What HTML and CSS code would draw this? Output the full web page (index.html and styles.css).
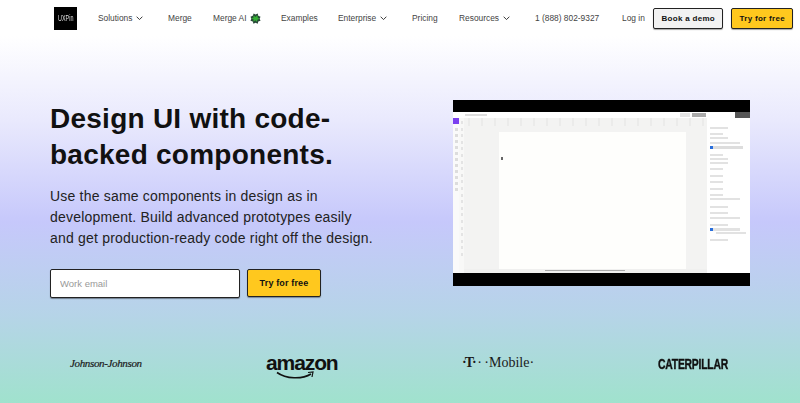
FILE: index.html
```html
<!DOCTYPE html>
<html lang="en">
<head>
<meta charset="utf-8">
<title>UXPin</title>
<link rel="stylesheet" href="styles.css">
</head>
<body>
<div class="page">
  <header class="nav">
    <div class="logo"><span>UXPin</span></div>
    <nav class="links">
      <a class="link w-solutions">Solutions <svg class="chev" viewBox="0 0 8 5"><path d="M.7.7 4 4l3.3-3.3"/></svg></a>
      <a class="link w-merge">Merge</a>
      <a class="link w-ai">Merge AI <svg class="gem" viewBox="0 0 12 12"><path class="gem-d" d="M4 .5 6 1.500 8.500.5 9 3l2.500 1-1 2.200 1 2.300L9 9.300l-.5 2.400L6 10.700l-2.200 1L3 9.300.5 8.500l1-2.300-1-2.200L3 3z"/><path class="gem-g" d="M3.500 2.500 6 4.300l2-2 .5 3 2 1-2.500 1-.5 2.500L6 8l-2.500 1.500L4 7 1.500 6l2.500-1z"/></svg></a>
      <a class="link w-examples">Examples</a>
      <a class="link w-enterprise">Enterprise <svg class="chev" viewBox="0 0 8 5"><path d="M.7.7 4 4l3.3-3.3"/></svg></a>
      <a class="link w-pricing">Pricing</a>
      <a class="link w-resources">Resources <svg class="chev" viewBox="0 0 8 5"><path d="M.7.7 4 4l3.3-3.3"/></svg></a>
      <a class="link w-phone">1 (888) 802-9327</a>
      <a class="link w-login">Log in</a>
    </nav>
    <a class="btn btn-light">Book a demo</a>
    <a class="btn btn-yellow">Try for free</a>
  </header>
  <main class="hero">
    <section class="copy">
      <h1>Design UI with code-backed components.</h1>
      <p>Use the same components in design as in development. Build advanced prototypes easily and get production-ready code right off the design.</p>
      <form class="signup">
        <input class="email" type="text" placeholder="Work email">
        <button class="btn btn-yellow btn-big" type="button">Try for free</button>
      </form>
    </section>
    <section class="video">
      <div class="bar"></div>
      <div class="app">
        <div class="app-top">
          <i class="crumb"></i><i class="pill"></i><i class="dark"></i><i class="dark-r"></i>
        </div>
        <div class="app-body">
          <div class="tools"><b></b><i></i><i></i><i></i><i></i><i></i><i></i><i></i><i></i><i></i><i></i><i></i></div>
          <div class="layers"><i></i><i></i><i></i><i></i><i></i><i></i><i></i><i></i><i></i><i></i><i></i><i></i><i></i><i></i><i></i><i></i><i></i><i></i><i></i><i></i><i></i></div>
          <div class="canvas-wrap">
            <div class="ruler"></div>
            <div class="canvas-row"><div class="sheet"><span class="cursor"></span></div></div>
            <div class="scroll"><span></span></div>
          </div>
          <div class="props">
            <i class="s"></i>
            <i class="xs m4"></i>
            <i class="s m2"></i>
            <i class="m m3"></i>
            <i class="check m2"></i>
            <i class="xs m5"></i>
            <i class="s m2"></i>
            <i class="s m2"></i>
            <i class="xs m4"></i>
            <i class="xs m5"></i>
            <i class="xs m4"></i>
            <i class="xs m5"></i>
            <i class="xs m4"></i>
            <i class="m m2"></i>
            <i class="s m6"></i>
            <i class="s m4"></i>
            <i class="m m3"></i>
            <i class="s m5"></i>
            <i class="swatch m2"></i>
            <i class="label m1"></i>
            <i class="s m5"></i>
          </div>
        </div>
      </div>
      <div class="bar bar-b"></div>
    </section>
  </main>
  <footer class="brands">
    <span class="brand jj">Johnson-Johnson</span>
    <span class="brand amazon">amazon<svg class="smile" viewBox="0 0 40 9"><path class="smile-l" d="M2 1.500C11 8 27 8.500 36 3"/><path class="smile-a" d="M33 1.500 38 1l-1 5"/></svg></span>
    <span class="brand tm"><b>&middot;T&middot;</b> &middot; &middot;Mobile&middot;</span>
    <span class="brand cat">CATERPILLAR</span>
  </footer>
</div>
</body>
</html>
```

FILE: styles.css
```css
* { box-sizing: border-box; }
html, body { margin: 0; padding: 0; }
body { font-family: "Liberation Sans", Arial, sans-serif; color: #111; }
.page {
  width: 800px; height: 403px; overflow: hidden;
  display: flex; flex-direction: column;
  background: linear-gradient(180deg, #fff 9%, #e9e9fd 30%, #c6c8fb 55%, #b6d4e8 78%, #a0e2cd 100%);
}
.nav { height: 36px; display: flex; align-items: center; padding: 0 7px 0 54px; flex: none; background: #fff; }
.logo { width: 23px; height: 23px; background: #000; color: #ddd; display: flex; align-items: center; justify-content: center; margin-right: 21px; }
.logo span { font-size: 9px; transform: scaleX(.6); white-space: nowrap; }
.links { display: flex; align-items: center; font-size: 8.400px; color: #444; }
.link { display: flex; align-items: center; gap: 3px; white-space: nowrap; }
.w-solutions { width: 70px; }
.w-merge { width: 45px; }
.w-ai { width: 68px; }
.w-examples { width: 57px; }
.w-enterprise { width: 74px; }
.w-pricing { width: 47px; }
.w-resources { width: 76px; }
.w-phone { width: 87px; }
.w-login { width: 31px; }
.chev { width: 7px; height: 4.500px; fill: none; stroke: #333; stroke-width: 1.100; margin-left: 1px; }
.gem { width: 11px; height: 11px; }
.gem-d { fill: #2b4a3a; }
.gem-g { fill: #35b035; }
.btn { display: flex; align-items: center; justify-content: center; font-family: "Liberation Sans", sans-serif; font-weight: 700; font-size: 8px; letter-spacing: .3px; height: 21px; border: 1px solid #222; border-radius: 2px; color: #111; white-space: nowrap; box-shadow: 0 1px 1px rgba(0,0,0,.35); }
.btn-light { width: 71px; background: #f2f2f2; margin-right: 8px; }
.btn-yellow { width: 62px; background: #ffc81e; }
.hero { flex: none; height: 298px; display: flex; padding: 0 50px; justify-content: space-between; }
.copy { width: 340px; padding-top: 65px; }
h1 { margin: 0; font-family: "Liberation Sans", sans-serif; font-weight: 700; font-size: 28px; line-height: 36px; letter-spacing: .25px; color: #111; width: 300px; }
.copy p { margin: 12.500px 0 0; font-family: "Liberation Sans", sans-serif; font-size: 14px; line-height: 21.300px; letter-spacing: .2px; color: #222; width: 325px; }
.signup { display: flex; gap: 7px; margin-top: 19.600px; align-items: center; }
.email { width: 190px; height: 29px; border: 1px solid #222; border-radius: 2px; background: #fff; padding: 0 9px; font-family: "Liberation Sans", sans-serif; font-size: 9.500px; box-shadow: 0 1px 1px rgba(0,0,0,.4); outline: none; }
.email::placeholder { color: #999; opacity: 1; }
.btn-big { width: 74px; height: 28px; font-size: 9px; letter-spacing: .15px; }
.video { width: 297px; height: 186px; margin-top: 64px; display: flex; flex-direction: column; background: #000; }
.bar { height: 12px; background: #000; flex: none; }
.bar-b { height: 13px; }
.app { flex: 1; display: flex; flex-direction: column; background: #f3f3f2; min-height: 0; position: relative; }
.app-top { height: 6px; background: #fff; display: flex; align-items: center; padding: 0 0 0 12px; flex: none; filter: blur(.4px); }
.crumb { width: 22px; height: 2px; background: #ddd; }
.pill { width: 10px; height: 4px; background: #e4e4e4; margin-left: auto; }
.dark { width: 14px; height: 4px; background: #aaa; margin: 0 29px 0 2px; }
.dark-r { width: 15px; height: 6px; background: #555; }
.app-body { flex: 1; display: flex; min-height: 0; }
.tools { width: 6px; background: #fafafa; display: flex; flex-direction: column; align-items: center; gap: 3px; flex: none; }
.tools b { width: 6px; height: 6px; background: #7a3ff0; margin-bottom: 1px; }
.tools i { width: 3px; height: 3px; background: #ddd; filter: blur(.4px); }
.layers { width: 5px; padding-top: 3px; background: #f8f8f7; display: flex; flex-direction: column; align-items: center; gap: 3.600px; flex: none; }
.layers i { width: 2px; height: 3px; background: #e4e4e4; filter: blur(.4px); }
.canvas-wrap { flex: 1; display: flex; flex-direction: column; min-width: 0; }
.ruler { height: 8px; background: repeating-linear-gradient(90deg, #f3f3f2 0 4px, #ebebea 4px 6px, #f3f3f2 6px 13px); flex: none; }
.canvas-row { flex: 1; padding: 6px 21px 0 35px; min-height: 0; }
.sheet { height: 100%; background: #fefefc; position: relative; }
.cursor { position: absolute; left: 2px; top: 25px; width: 2px; height: 3px; background: #666; filter: blur(.4px); }
.scroll { height: 4px; background: #f0f0ef; padding: 1px 0 1px 81px; flex: none; }
.scroll span { display: block; width: 80px; height: 1px; background: #aaa; }
.props { width: 43px; background: #fff; padding: 9px 3px 0; display: flex; flex-direction: column; flex: none; filter: blur(.4px); }
.props i { display: block; height: 2px; background: #e2e2e2; flex: none; }
.props .m { width: 30px; }
.props .s { width: 18px; }
.props .xs { width: 13px; }
.props .check { width: 33px; background: linear-gradient(90deg, #2a6fdc 0 3px, #ddd 3px); height: 3px; }
.props .swatch { width: 30px; height: 3px; background: linear-gradient(90deg, #2a6fdc 0 3px, #e2e2e2 3px); }
.props .label { width: 30px; margin-left: 6px; }
.props .m1 { margin-top: 1px; }
.props .m2 { margin-top: 2px; }
.props .m3 { margin-top: 3px; }
.props .m4 { margin-top: 4px; }
.props .m5 { margin-top: 5px; }
.props .m6 { margin-top: 6px; }
.brands { flex: 1; position: relative; }
.brand { position: absolute; color: #1a1a1a; white-space: nowrap; }
.jj { left: 70px; top: 23px; font-family: "Liberation Serif", serif; font-style: italic; font-size: 11px; letter-spacing: -.35px; -webkit-text-stroke: .2px #1a1a1a; }
.amazon { left: 266px; top: 17px; font-size: 21px; font-weight: 700; letter-spacing: -1.100px; font-family: "Liberation Sans", sans-serif; color: #111; }
.smile { position: absolute; left: 9px; top: 20px; width: 40px; height: 9px; }
.smile-l { fill: none; stroke: #111; stroke-width: 1.600; }
.smile-a { fill: none; stroke: #111; stroke-width: 1.200; }
.tm { left: 462px; top: 21px; font-family: "Liberation Serif", serif; font-size: 14px; word-spacing: -1px; }
.tm b { font-weight: 700; letter-spacing: -2px; }
.cat { left: 658px; top: 21px; font-family: "Liberation Sans", sans-serif; font-weight: 700; font-size: 15px; letter-spacing: -.3px; transform: scaleX(.69); transform-origin: left; color: #111; -webkit-text-stroke: .4px #111; }
```
